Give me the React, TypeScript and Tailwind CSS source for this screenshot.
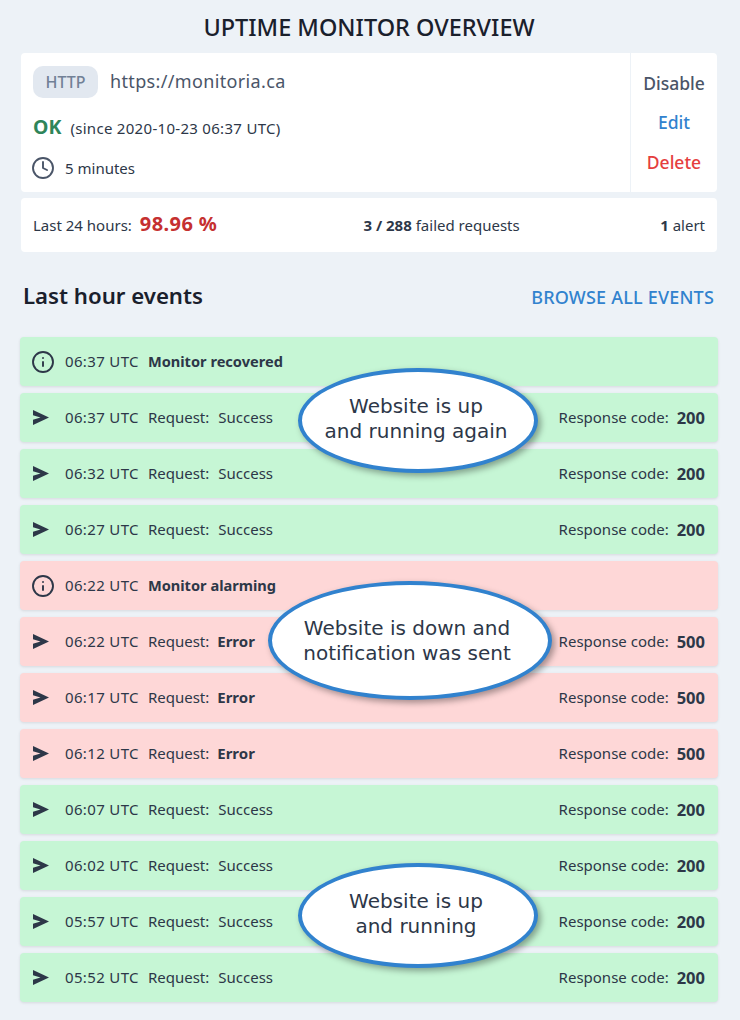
import { Clock, Info } from 'lucide-react';

interface EventRow {
  time: string;
  ok: boolean;
  label?: string;
  code?: number;
}

const events: EventRow[] = [
  { time: '06:37', ok: true, label: 'Monitor recovered' },
  { time: '06:37', ok: true, code: 200 },
  { time: '06:32', ok: true, code: 200 },
  { time: '06:27', ok: true, code: 200 },
  { time: '06:22', ok: false, label: 'Monitor alarming' },
  { time: '06:22', ok: false, code: 500 },
  { time: '06:17', ok: false, code: 500 },
  { time: '06:12', ok: false, code: 500 },
  { time: '06:07', ok: true, code: 200 },
  { time: '06:02', ok: true, code: 200 },
  { time: '05:57', ok: true, code: 200 },
  { time: '05:52', ok: true, code: 200 },
];

function SendIcon() {
  return (
    <svg viewBox="0 0 16 15" className="h-[15px] w-4 fill-[#2d3748]">
      <path d="M0 0 L16 7.5 L0 15 L0 9.8 L7.5 7.5 L0 5.2 Z" />
    </svg>
  );
}

function Event({ event }: { event: EventRow }) {
  return (
    <div
      className={`flex h-[49px] items-center justify-between rounded px-[13px] text-[15px] text-[#2d3748] shadow-[0_1px_3px_rgba(0,0,0,0.1)] ${
        event.ok ? 'bg-[#c6f6d5]' : 'bg-[#fed7d7]'
      }`}
    >
      <div className="flex items-center">
        <div className="flex w-[32px] items-center">
          {event.label ? <Info className="-ml-[2px] h-[24px] w-[24px]" strokeWidth={1.9} /> : <SendIcon />}
        </div>
        <span className="tracking-[0.35px]">{event.time} UTC</span>
        {event.label ? (
          <span className="ml-[9px] text-[14.6px] font-bold">{event.label}</span>
        ) : (
          <>
            <span className="ml-[9px]">Request:</span>
            <span className={event.ok ? 'ml-[9px]' : 'ml-[8px] font-bold'}>{event.ok ? 'Success' : 'Error'}</span>
          </>
        )}
      </div>
      {event.code && (
        <div className="flex items-center">
          Response code:<span className="ml-[8px] translate-y-px text-[16.5px] font-bold">{event.code}</span>
        </div>
      )}
    </div>
  );
}

function Callout({ className, children }: { className: string; children: React.ReactNode }) {
  return (
    <div
      className={`absolute flex items-center justify-center rounded-[50%] border-4 border-[#3182ce] bg-white text-center font-['DejaVu_Sans',sans-serif] text-[20px] leading-[25px] text-[#2d3748] shadow-[3px_3px_6px_rgba(0,0,0,0.35)] ${className}`}
    >
      {children}
    </div>
  );
}

export default function App() {
  return (
    <div className="relative h-[1020px] w-[740px] overflow-hidden bg-[#edf2f7] font-['Noto_Sans',sans-serif] text-[#2d3748]">
      <h1 className="pt-[11px] pr-[2px] text-center text-[23.5px] leading-[32px] font-medium text-[#1a202c]">UPTIME MONITOR OVERVIEW</h1>

      <div className="mt-[10px] mr-[23px] ml-[21px]">
        <div className="flex h-[139px] rounded bg-white">
          <div className="flex-1 pl-3">
            <div className="flex items-center pt-[13px]">
              <span className="flex h-8 w-[65px] items-center justify-center rounded-[10px] bg-[#e2e8f0] text-base font-medium text-[#718096]">HTTP</span>
              <span className="ml-3 -translate-y-px text-lg tracking-[0.35px] text-[#4a5568]">https://monitoria.ca</span>
            </div>
            <div className="mt-[14px] flex items-baseline">
              <span className="text-[19.5px] font-bold text-[#2f855a]">OK</span>
              <span className="ml-[9px] text-[15px] tracking-[0.3px]">(since 2020-10-23 06:37 UTC)</span>
            </div>
            <div className="mt-[15px] flex items-center text-[15px]">
              <Clock className="-ml-[2px] h-[24px] w-[24px] text-[#4a5568]" strokeWidth={1.9} />
              <span className="ml-[10px]">5 minutes</span>
            </div>
          </div>
          <div className="flex w-[87px] flex-col items-center border-l border-[#edf2f7] pt-[18px] text-[17.5px] font-medium">
            <span className="leading-6 text-[#4a5568]">Disable</span>
            <span className="mt-[15px] leading-6 text-[#3182ce]">Edit</span>
            <span className="mt-[16px] leading-6 text-[#e53e3e]">Delete</span>
          </div>
        </div>

        <div className="mt-[6px] flex h-[54px] items-center justify-between rounded bg-white px-3 text-[15px]">
          <div className="flex w-[190px] items-center">
            <span>Last 24 hours:</span>
            <span className="ml-2 -translate-y-px text-[20px] font-bold tracking-[0.4px] text-[#c53030]">98.96 %</span>
          </div>
          <div>
            <span className="font-bold">3 / 288</span> failed requests
          </div>
          <div>
            <span className="font-bold">1</span> alert
          </div>
        </div>
      </div>

      <div className="mx-[23px] mt-[26px] flex h-[36px] items-center justify-between">
        <h2 className="text-[22.2px] leading-[34px] font-semibold text-[#1a202c]">Last hour events</h2>
        <span className="mr-[3px] translate-y-px text-[18px] font-medium tracking-[0.2px] text-[#3182ce]">BROWSE ALL EVENTS</span>
      </div>

      <div className="mt-[23px] mr-[22px] ml-5 flex flex-col gap-[7px]">
        {events.map((event, i) => (
          <Event key={i} event={event} />
        ))}
      </div>

      <Callout className="top-[368px] left-[298px] h-[105px] w-[240px] pr-1 pb-1">
        Website is up
        <br />
        and running again
      </Callout>
      <Callout className="top-[581px] left-[268px] h-[119px] w-[284px] pr-[6px]">
        Website is down and
        <br />
        notification was sent
      </Callout>
      <Callout className="top-[863px] left-[298px] h-[105px] w-[240px] pr-1 pb-1">
        Website is up
        <br />
        and running
      </Callout>
    </div>
  );
}
